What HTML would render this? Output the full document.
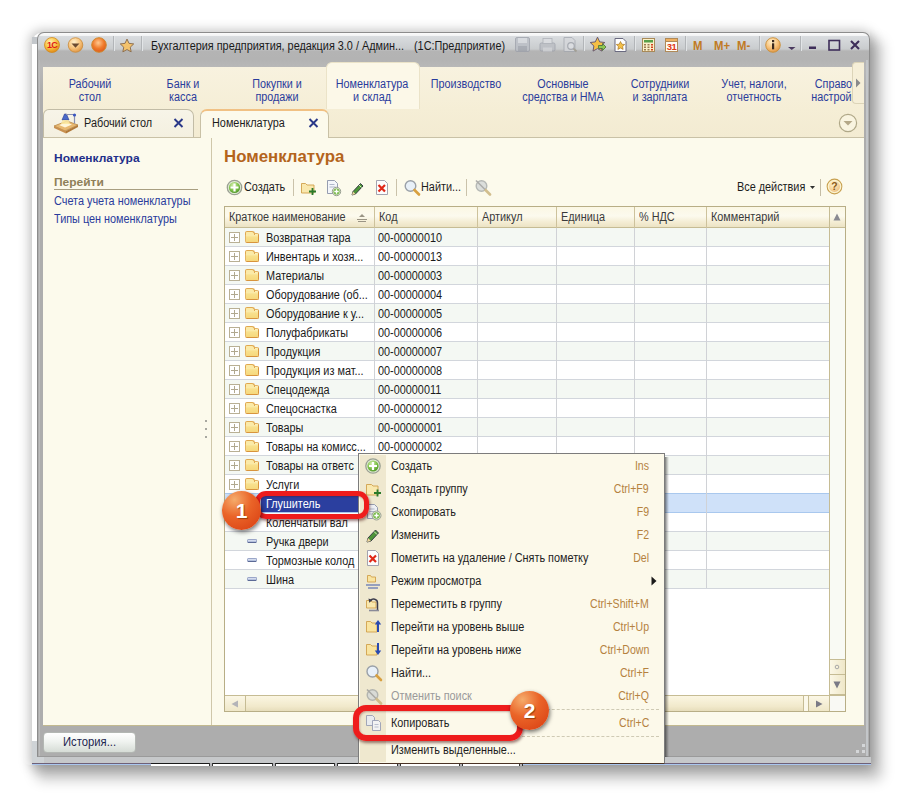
<!DOCTYPE html>
<html lang="ru"><head><meta charset="utf-8"><title>Номенклатура</title>
<style>
*{box-sizing:border-box}
html,body{margin:0;padding:0}
body{width:903px;height:798px;position:relative;overflow:hidden;background:#fff;
 font-family:"Liberation Sans",sans-serif;font-size:12px;color:#202020}
div,span{position:absolute;white-space:nowrap}
svg{position:absolute;overflow:visible}
/* underlying desktop remnants */
#under-l{left:32px;top:741px;width:12px;height:23px;background:#cfd3d6}
#under-b{left:32px;top:757px;width:839px;height:6px;background:#c6c8ca}
#under-b2{left:32px;top:763px;width:839px;height:1px;background:#6e6078}
#under-b3{left:32px;top:764px;width:839px;height:1px;background:#a9c6ee}
/* window */
#shadow{left:33px;top:33px;width:837px;height:731px;border-radius:8px 8px 3px 3px;box-shadow:0 1.500px 12px 3px rgba(0,0,0,.27)}
#shadow-r{left:24px;top:25px;width:846px;height:740px;border-radius:6px;box-shadow:12px 15px 13px rgba(0,0,0,.22)}
#under-s{left:32px;top:37px;width:6px;height:705px;background:#fff}
#under-s2{left:32px;top:37px;width:6px;height:7px;background:#c3c7cb}
#win{left:37px;top:32px;width:833px;height:725px;border-radius:7px 7px 0 0;
 background:linear-gradient(#fbfbfb 0,#f2f3f4 3px,#dadde0 3px,#c9ccce 16px,#b4b4b4 18px,#b3b3b3 26px,#b8b8b8 35px,#adadad 60px,#adadad 100%);
 border:1px solid #8c8c8c;border-bottom-color:#9a9a9a}
#win-hi{display:none}
#frame-r{left:866px;top:60px;width:2px;height:696px;background:#c3c6c9}
#frame-l{left:39px;top:60px;width:1px;height:696px;background:#bcbcbc}
#title{left:151px;top:38px;height:16px;line-height:16px;color:#1a1a1a}
#title2{left:414px;top:38px;height:16px;line-height:16px;color:#1a1a1a}
.tsep{top:36px;width:1px;height:15px;background:#b2b5b8;box-shadow:1px 0 0 #e2e5e7}
/* sections panel */
#sect{left:43px;top:67px;width:821px;height:43px;background:linear-gradient(#f8f2df,#f5eed6)}
.sec{top:78px;text-align:center;color:#2a3c9c;line-height:13px;font-size:12px;transform:translateX(-50%) scaleX(.9);transform-origin:center}
#sec-act{left:326px;top:62px;width:94px;height:48px;border-radius:6px 6px 0 0;background:#fcf8e8;border:1px solid #ebe3c8;border-bottom:none}
#sec-scroll{left:852px;top:62px;width:12px;height:42px;border-radius:4px 0 0 4px;background:#f6efd8;border:1px solid #dcd4b8;border-right:none}
/* tabs */
#tabs{left:43px;top:109px;width:821px;height:28px;background:linear-gradient(#f5eed6,#f3ebd2)}
#tab1{left:43px;top:109px;width:151px;height:28px;border:1px solid #c2bca6;border-bottom:none;border-radius:6px 7px 0 0;background:linear-gradient(#f7f4e8,#f4f0e0)}
#tab2{left:200px;top:109px;width:129px;height:29px;border:1px solid #c9c1a6;border-bottom:none;border-radius:7px 7px 0 0;background:#fcfaec;border-top:2px solid #f1c184}
#tabline{left:43px;top:137px;width:821px;height:1px;background:#c9c1a6}
/* content */
#content{left:43px;top:138px;width:821px;height:588px;background:#fcfaec}
#navdiv{left:211px;top:138px;width:1px;height:588px;background:#cfc7aa}
#contentb{left:43px;top:725px;width:821px;height:1px;background:#c2b98f}
.nav{left:54px;color:#2a3c9c}
h1{position:absolute;margin:0;left:224px;top:146px;font-size:17px;line-height:22px;font-weight:bold;color:#b4641c;transform:scaleX(.99);transform-origin:left}
/* table */
#tbl{left:224px;top:206px;width:622px;height:506px;background:#fff;border:1px solid #b8ae86}
#thead{left:225px;top:207px;width:620px;height:21px;background:linear-gradient(#fbf7e4,#fcfaee 45%,#f4edd4 75%,#ece3c4);border-bottom:1px solid #c6bc94}
.hsep{top:207px;width:1px;height:21px;background:#cdc29c}
.th{top:208px;height:19px;line-height:19px;color:#3a3a3a}
.vsep{top:228px;width:1px;background:#d0d2d6}
.row{left:225px;width:604px;height:19px;border-bottom:1px solid #d2d6dc;background:#fff}
.row.alt{background:#f4f8f3}
.row.sel{background:#cfe1f9;border-bottom-color:#a9c8ee;box-shadow:0 -1px 0 #a9c8ee}
.nm{left:41px;top:1px;line-height:18px;height:18px;color:#1a1a1a}
.cd{left:153px;top:1px;line-height:18px;height:18px;color:#1a1a1a}
.selbg{left:36px;width:112px;background:#2b3f9f;top:0px;height:18px}
.selnm{color:#fff}
.plus{left:4px;top:4px;width:11px;height:11px;border:1px solid #b9b094;background:#fff}
.plus:before,.plus:after{content:"";position:absolute;background:#b0a88e}
.plus:before{left:1px;top:4px;width:7px;height:1px}
.plus:after{left:4px;top:1px;width:1px;height:7px}
.fold{left:20px;top:5px;width:14px;height:10px;border-radius:2px;background:linear-gradient(#fdf3c0,#f8e08c 40%,#f6d87c);border:1px solid #e4b464;border-right-color:#d8943c;border-bottom-color:#d8943c}
.fold:before{content:"";position:absolute;left:-1px;top:-3px;width:8px;height:3px;border-radius:2px 3px 0 0;background:#fbeaa8;border:1px solid #e0a850;border-bottom:none}
.item{left:22px;top:7px;width:10px;height:4px;border-radius:1.5px;background:linear-gradient(#e4eaf6,#a6b4d6);border:1px solid #9aa6c8;border-bottom-color:#5c6a96}
/* scrollbars */
#vsb{left:829px;top:207px;width:16px;height:488px;background:#f9faf4;border-left:1px solid #c6bc94}
#hsb{left:225px;top:695px;width:605px;height:16px;background:#fbf8ea;border-top:1px solid #c6bc94}
.sbbtn{width:15px;height:15px;background:linear-gradient(90deg,#fbf7e6,#efe7c8)}
/* bottom */
#hist{left:43px;top:732px;width:93px;height:21px;border-radius:4px;border:1px solid #b3b7b3;background:linear-gradient(#ffffff,#f0f3f0 45%,#d6dcd6)}
#histt{left:63px;top:734px;line-height:16px;color:#1c2550;font-size:12.5px;transform:scaleX(.9);transform-origin:left}
/* menu */
#menu{left:358px;top:453px;width:307px;height:311px;background:#fcf9ea;border:1px solid #7c7c7c;border-bottom-color:#4a3224;}
#menush{left:665px;top:457px;width:4px;height:300px;background:linear-gradient(90deg,rgba(0,0,0,.5),rgba(0,0,0,.28) 40%,rgba(0,0,0,0))}
#menuic{left:360px;top:455px;width:26px;height:307px;background:#efe8cf}
.mi{left:391px;height:16px;line-height:16px;color:#1e1e1e}
.mk{right:254px;height:16px;line-height:16px;color:#b5823f;text-align:right;transform:scaleX(.88);transform-origin:right}
.msep{left:388px;width:271px;height:0;border-top:1px dashed #cfcab4}
/* annotations */
.ann{border:5px solid #ee1c1c;border-radius:11px;box-shadow:1px 2px 3px rgba(60,0,0,.5), inset 1px 1px 2px rgba(90,0,0,.3)}
.badge{width:31px;height:31px;border-radius:50%;background:radial-gradient(circle at 32% 22%,#f5ac6c,#ea6428 42%,#dd4818 82%);box-shadow:1px 2px 4px rgba(0,0,0,.55);color:#fff;font-weight:bold;font-size:19px;line-height:31px;text-align:center;letter-spacing:0;text-shadow:1px 1px 1px rgba(120,50,0,.7)}

.t,#title,#title2,.nav,.th,.nm,.cd,.mi{transform:scaleX(.905);transform-origin:left}
#tb{left:151px;top:763px;width:371px;height:1px;background:#1a1a1a}
#tbw{left:151px;top:764px;width:371px;height:2px;background:#fff}
.tbd{top:763px;width:4px;height:3px;background:#b4b4b8;border-left:1px solid #333;border-right:1px solid #333}

</style></head>
<body>
<!-- underlying remnants + shadow -->
<div id="shadow"></div><div id="shadow-r"></div>
<div id="under-s"></div><div id="under-s2"></div><div id="under-b"></div><div id="under-l"></div><div id="under-b2"></div><div id="under-b3"></div>
<div id="win"></div><div id="win-hi"></div><div id="frame-r"></div><div id="frame-l"></div>

<!-- title bar icons (left) -->
<svg style="left:43px;top:36px" width="80" height="18" viewBox="0 0 80 18">
 <defs>
  <radialGradient id="gy" cx="40%" cy="30%" r="70%"><stop offset="0" stop-color="#fff3b0"/><stop offset=".6" stop-color="#f8c040"/><stop offset="1" stop-color="#e08a18"/></radialGradient>
  <radialGradient id="go" cx="40%" cy="30%" r="70%"><stop offset="0" stop-color="#fff0cc"/><stop offset=".6" stop-color="#f7c27a"/><stop offset="1" stop-color="#e09848"/></radialGradient>
  <radialGradient id="gr" cx="45%" cy="35%" r="70%"><stop offset="0" stop-color="#ffc890"/><stop offset=".55" stop-color="#f07a2a"/><stop offset="1" stop-color="#d9541a"/></radialGradient>
 </defs>
 <circle cx="9" cy="9" r="7.5" fill="url(#gy)" stroke="#d08a20" stroke-width=".8"/>
 <text x="9" y="12.3" font-family="Liberation Sans,sans-serif" font-size="9" font-weight="bold" fill="#e01818" text-anchor="middle" letter-spacing="-0.8">1С</text>
 <circle cx="32.5" cy="9" r="7.3" fill="url(#go)" stroke="#c98a3a" stroke-width=".8"/>
 <path d="M28.5 7.5h8l-4 4.2z" fill="#6a4a30"/>
 <circle cx="56" cy="9" r="7.3" fill="url(#gr)" stroke="#d08a30" stroke-width="1"/>
</svg>
<div class="tsep" style="left:113px"></div>
<svg style="left:119px;top:38px" width="16" height="15" viewBox="0 0 18 17"><path d="M9 1.2l2.300 4.900 5.300.6-3.900 3.700 1 5.300L9 13.100l-4.700 2.600 1-5.300L1.400 6.700l5.300-.6z" fill="#f3c26c" stroke="#8c6e4e" stroke-width="1.100" stroke-linejoin="round"/></svg>
<div class="tsep" style="left:141px"></div>
<div id="title">Бухгалтерия предприятия, редакция 3.0 / Админ...</div>
<div id="title2">(1С:Предприятие)</div>

<!-- title bar icons (right) -->
<svg style="left:514px;top:36px" width="64" height="18" viewBox="0 0 64 18" opacity=".75">
 <rect x="1.500" y="1.500" width="14" height="14" rx="1.500" fill="#b8bcc4" stroke="#9a9ea8"/>
 <rect x="4" y="2" width="9" height="5" fill="#d8dbe0"/><rect x="4" y="10" width="9" height="5" fill="#9ea2ac"/>
 <rect x="26" y="7" width="15" height="8" rx="1.500" fill="#b9bcc2" stroke="#9a9ea8"/>
 <rect x="29" y="2.500" width="9" height="5" fill="#dcdee2" stroke="#a4a7ae" stroke-width=".8"/><rect x="29" y="11.500" width="9" height="4" fill="#d0d2d6"/>
 <path d="M50 1.500h8l3 3v11H50z" fill="#d6d8dc" stroke="#a2a6ae"/>
 <circle cx="57" cy="10" r="3.300" fill="#e0e2e6" stroke="#9a9ea6" stroke-width="1.200"/><path d="M59.500 12.500l3 3" stroke="#9a9688" stroke-width="1.800"/>
</svg>
<div class="tsep" style="left:583px"></div>
<svg style="left:589px;top:36px" width="40" height="18" viewBox="0 0 40 18">
 <path d="M8.500 1.200l2.200 4.700 5.100.6-3.700 3.500.9 5.100-4.500-2.500L4 15.100l.9-5.100L1.200 6.500l5.100-.6z" fill="#f4bf45" stroke="#6a5a70" stroke-width="1" stroke-linejoin="round"/>
 <path d="M9.500 9.500h4v-2l3.500 3.500-3.500 3.500v-2h-4z" fill="#8cc850" stroke="#4a6a3a" stroke-width=".8"/>
 <path d="M26 2.500h8l3 3v10H26z" fill="#fdfdfd" stroke="#6a6a80"/>
 <path d="M31.500 5.500l1.300 2.700 2.900.3-2.100 2 .5 2.900-2.600-1.400-2.600 1.400.5-2.900-2.100-2 2.900-.3z" fill="#f4bf45" stroke="#a8782c" stroke-width=".7"/>
</svg>
<div class="tsep" style="left:634px"></div>
<svg style="left:641px;top:36px" width="40" height="18" viewBox="0 0 40 18">
 <rect x="1.500" y="2.500" width="12" height="13" fill="#fbf0c8" stroke="#a88a58"/>
 <rect x="3" y="4" width="9" height="2.500" fill="#58a048"/>
 <g fill="#9a7a50"><rect x="3" y="8" width="2" height="1.500"/><rect x="6.500" y="8" width="2" height="1.500"/><rect x="10" y="8" width="2" height="1.500" fill="#d04020"/><rect x="3" y="10.500" width="2" height="1.500"/><rect x="6.500" y="10.500" width="2" height="1.500"/><rect x="10" y="10.500" width="2" height="1.500" fill="#d04020"/><rect x="3" y="13" width="2" height="1.500"/><rect x="6.500" y="13" width="2" height="1.500"/><rect x="10" y="13" width="2" height="1.500" fill="#d04020"/></g>
 <rect x="24.500" y="2.500" width="12" height="13" fill="#fffdf4" stroke="#b08a58"/>
 <rect x="24.500" y="2.500" width="12" height="3" fill="#f0b060" stroke="#b08a58"/>
 <text x="30.500" y="14.300" font-family="Liberation Sans,sans-serif" font-size="9.500" font-weight="bold" fill="#e03818" text-anchor="middle" letter-spacing="-0.6">31</text>
</svg>
<div class="tsep" style="left:685px"></div>
<div class="t" style="left:693px;top:38px;line-height:16px;font-weight:bold;color:#c07a24;font-size:12.5px">M</div>
<div class="t" style="left:714px;top:38px;line-height:16px;font-weight:bold;color:#c07a24;font-size:12.5px">M+</div>
<div class="t" style="left:737px;top:38px;line-height:16px;font-weight:bold;color:#c07a24;font-size:12.5px">M-</div>
<div class="tsep" style="left:759px"></div>
<svg style="left:765px;top:37px" width="32" height="16" viewBox="0 0 32 16">
 <circle cx="8" cy="8" r="7.300" fill="url(#go)" stroke="#c9903a" stroke-width=".9"/>
 <rect x="7" y="6.300" width="2.200" height="6" fill="#3a2a20"/><rect x="7" y="3" width="2.200" height="2.200" fill="#3a2a20"/>
 <path d="M23 10h7.500l-3.750 3z" fill="#4a3a60"/>
</svg>
<div class="tsep" style="left:800px"></div>
<svg style="left:806px;top:38px" width="56" height="14" viewBox="0 0 56 14">
 <rect x="3" y="8.500" width="7" height="2.500" fill="#3e2e5a"/>
 <rect x="23" y="2.500" width="10.500" height="9.500" fill="none" stroke="#3e2e5a" stroke-width="1.600"/>
 <path d="M45 3l8 8M53 3l-8 8" stroke="#3e2e5a" stroke-width="2.100"/>
</svg>

<!-- sections panel -->
<div id="sect"></div>
<div id="sec-act"></div>
<div class="sec" style="left:90px">Рабочий<br>стол</div>
<div class="sec" style="left:183px">Банк и<br>касса</div>
<div class="sec" style="left:277px">Покупки и<br>продажи</div>
<div class="sec" style="left:372px">Номенклатура<br>и склад</div>
<div class="sec" style="left:466px">Производство</div>
<div class="sec" style="left:563px">Основные<br>средства и НМА</div>
<div class="sec" style="left:660px">Сотрудники<br>и зарплата</div>
<div class="sec" style="left:754px">Учет, налоги,<br>отчетность</div>
<div style="left:804px;top:78px;width:49.500px;height:28px;overflow:hidden"><div class="sec" style="left:48px;top:0">Справочники и<br>настройки учета</div></div>
<div id="sec-scroll"></div>
<svg style="left:855px;top:78px" width="6" height="10" viewBox="0 0 6 10"><path d="M1 0.500l4.500 4.500-4.500 4.500z" fill="#8a8a8a"/></svg>

<!-- tabs -->
<div id="tabs"></div>
<div id="tabline"></div>
<div id="tab1"></div>
<div id="tab2"></div>
<svg style="left:53px;top:111px" width="26" height="22" viewBox="0 0 26 22">
 <path d="M1 15l13-5 11 4-13 6z" fill="#e8b870" stroke="#b88848" stroke-width=".8"/>
 <path d="M1 15v2l12 5.500v-2.500z" fill="#c89050"/><path d="M13 20v2.500l12-6.500v-2z" fill="#b07838"/>
 <path d="M6 14l7-2.500 6 2-7 3z" fill="#fff6d8"/>
 <path d="M9 9l2.500-6h2l2.500 6z" fill="#4a6ac8" stroke="#2a3a90" stroke-width=".6"/>
 <path d="M8 13l1.500-4h6l1.500 4z" fill="#fbe9a0" opacity=".85"/>
 <path d="M13 3.500h8.500v9" fill="none" stroke="#8a90b0" stroke-width="1.200"/>
 <circle cx="21.500" cy="4" r="1.600" fill="#3a56c0"/>
</svg>
<div class="t" style="left:84px;top:115px;line-height:16px;color:#1c1c1c">Рабочий стол</div>
<svg style="left:173px;top:118px" width="11" height="10" viewBox="0 0 11 10"><path d="M1.500 1l8 8M9.500 1l-8 8" stroke="#2a3888" stroke-width="1.900"/></svg>
<div class="t" style="left:212px;top:115px;line-height:16px;color:#1c1c1c">Номенклатура</div>
<svg style="left:308px;top:118px" width="11" height="10" viewBox="0 0 11 10"><path d="M1.500 1l8 8M9.500 1l-8 8" stroke="#2a3888" stroke-width="1.900"/></svg>
<svg style="left:838px;top:113px" width="20" height="20" viewBox="0 0 20 20"><circle cx="10" cy="10" r="8.600" fill="#f9f4e0" stroke="#b0a888" stroke-width="1.200"/><path d="M5.500 8h9l-4.500 4.500z" fill="#b4a888"/></svg>

<!-- content -->
<div id="content"></div>
<div id="navdiv"></div>
<div id="contentb"></div>
<div class="nav" style="top:150px;font-weight:bold;line-height:16px;color:#1f2f8a;font-size:10.5px;transform:scaleX(1.14)">Номенклатура</div>
<div class="nav" style="top:175px;font-weight:bold;line-height:15px;color:#8f8058;font-size:10.5px;transform:scaleX(1.14)">Перейти</div>
<div style="left:54px;top:189px;width:144px;height:1px;background:#a89e80"></div>
<div class="nav" style="top:193px;line-height:16px">Счета учета номенклатуры</div>
<div class="nav" style="top:211px;line-height:16px">Типы цен номенклатуры</div>
<svg style="left:204px;top:419px" width="4" height="22" viewBox="0 0 4 22"><g fill="#a8a8a0"><rect x="1" y="1" width="2" height="2"/><rect x="1" y="9" width="2" height="2"/><rect x="1" y="17" width="2" height="2"/></g></svg>
<h1>Номенклатура</h1>

<!-- toolbar -->
<svg style="left:226px;top:179px" width="16" height="16" viewBox="0 0 16 16">
 <defs><radialGradient id="gg" cx="40%" cy="30%" r="75%"><stop offset="0" stop-color="#d8f0b0"/><stop offset=".6" stop-color="#7cc048"/><stop offset="1" stop-color="#4a9028"/></radialGradient></defs>
 <circle cx="8.500" cy="8.500" r="7.200" fill="#e4ecd8" stroke="#9aa092" stroke-width="1.300"/>
 <circle cx="8.500" cy="8.500" r="5.600" fill="url(#gg)"/>
 <path d="M8.500 4.500v8M4.500 8.500h8" stroke="#fff" stroke-width="2.200"/>
</svg>
<div class="t" style="left:244px;top:179px;line-height:16px;color:#1c1c1c">Создать</div>
<div style="left:293px;top:179px;width:1px;height:17px;background:#cac2aa"></div>
<svg style="left:300px;top:179px" width="76" height="17" viewBox="0 0 76 17">
 <path d="M1.500 4.500h4l1.500 1.500h7v8h-12.500z" fill="#f9e8ae" stroke="#d0a04c" stroke-width=".9"/>
 <path d="M12.500 9v7M9 12.500h7" stroke="#2a7a2a" stroke-width="1.800"/>
 <path d="M27.500 1.500h7l3 3v10h-10z" fill="#f4f6fa" stroke="#8a92a8" stroke-width=".9"/>
 <path d="M29.500 5.500h5M29.500 8h6" stroke="#a8b0c4" stroke-width=".9"/>
 <circle cx="36.500" cy="12.500" r="4.200" fill="#e4ecd8" stroke="#9aa092" stroke-width="1"/><circle cx="36.500" cy="12.500" r="3.100" fill="#78b848"/><path d="M36.500 10.300v4.400M34.300 12.500h4.400" stroke="#fff" stroke-width="1.300"/>
 <path d="M53 12.500l7.500-8 2.500 2.500-7.500 8-3.500 1z" fill="#4c9438" stroke="#2c3040" stroke-width=".9"/><path d="M53 12.500l2.500 2.500-3.500 1z" fill="#f0d8a0"/><path d="M59 6l2.500 2.500" stroke="#d8f0c0" stroke-width="1"/>
</svg>
<svg style="left:375px;top:179px" width="14" height="17" viewBox="0 0 14 17">
 <path d="M1.500 1.500h8l3 3v11h-11z" fill="#fdfdfd" stroke="#9a9aa8" stroke-width=".9"/>
 <path d="M3.500 6l6.500 6.500M10 6l-6.500 6.500" stroke="#e02818" stroke-width="2.200"/>
</svg>
<div style="left:396px;top:179px;width:1px;height:17px;background:#cac2aa"></div>
<svg style="left:403px;top:179px" width="18" height="17" viewBox="0 0 18 17">
 <circle cx="7.500" cy="7" r="5.300" fill="#e8f0f8" stroke="#9aa0a8" stroke-width="1.400"/>
 <path d="M11.500 11l4.500 4.500" stroke="#d8a040" stroke-width="2.600" stroke-linecap="round"/>
</svg>
<div class="t" style="left:421px;top:179px;line-height:16px;color:#1c1c1c">Найти...</div>
<div style="left:466px;top:179px;width:1px;height:17px;background:#cac2aa"></div>
<svg style="left:473px;top:178px" width="20" height="18" viewBox="0 0 20 18" opacity=".8">
 <circle cx="8.500" cy="8" r="5.300" fill="#d4d8d8" stroke="#a4a8a8" stroke-width="1.400"/>
 <path d="M12.500 12l4.500 4.500" stroke="#c8b078" stroke-width="2.600" stroke-linecap="round"/>
 <path d="M3 2.500l9 9" stroke="#9a9a9a" stroke-width="1.600"/>
</svg>
<div class="t" style="left:737px;top:179px;line-height:16px;color:#1c1c1c">Все действия</div>
<svg style="left:810px;top:186px" width="5" height="3" viewBox="0 0 5 3"><path d="M0 0h5l-2.500 3z" fill="#303030"/></svg>
<div style="left:820px;top:179px;width:1px;height:17px;background:#c4bca4"></div>
<svg style="left:826px;top:178px" width="17" height="17" viewBox="0 0 18 18">
 <circle cx="9" cy="9" r="7.800" fill="#fbf3d0" stroke="#c8a050" stroke-width="1.100"/>
 <circle cx="9" cy="9" r="5.800" fill="url(#go)" opacity=".55"/>
 <text x="9" y="13" font-family="Liberation Sans,sans-serif" font-size="11" font-weight="bold" fill="#8a5a18" text-anchor="middle">?</text>
</svg>

<!-- table -->
<div id="tbl"></div>
<div id="thead"></div>
<div class="th" style="left:229px">Краткое наименование</div>
<svg style="left:356px;top:213px" width="12" height="9" viewBox="0 0 12 9"><path d="M6 1l3 3h-6z" fill="#9a9484"/><path d="M1 6.500h10M2 8.500h8" stroke="#9a9484" stroke-width="1"/></svg>
<div class="th" style="left:379px">Код</div>
<div class="th" style="left:482px">Артикул</div>
<div class="th" style="left:561px">Единица</div>
<div class="th" style="left:639px">% НДС</div>
<div class="th" style="left:711px">Комментарий</div>
<div class="row alt" style="top:228px"><span class="plus"></span><span class="fold"></span><span class="nm">Возвратная тара</span><span class="cd">00-00000010</span></div>
<div class="row" style="top:247px"><span class="plus"></span><span class="fold"></span><span class="nm">Инвентарь и хозя...</span><span class="cd">00-00000013</span></div>
<div class="row alt" style="top:266px"><span class="plus"></span><span class="fold"></span><span class="nm">Материалы</span><span class="cd">00-00000003</span></div>
<div class="row" style="top:285px"><span class="plus"></span><span class="fold"></span><span class="nm">Оборудование (об...</span><span class="cd">00-00000004</span></div>
<div class="row alt" style="top:304px"><span class="plus"></span><span class="fold"></span><span class="nm">Оборудование к у...</span><span class="cd">00-00000005</span></div>
<div class="row" style="top:323px"><span class="plus"></span><span class="fold"></span><span class="nm">Полуфабрикаты</span><span class="cd">00-00000006</span></div>
<div class="row alt" style="top:342px"><span class="plus"></span><span class="fold"></span><span class="nm">Продукция</span><span class="cd">00-00000007</span></div>
<div class="row" style="top:361px"><span class="plus"></span><span class="fold"></span><span class="nm">Продукция из мат...</span><span class="cd">00-00000008</span></div>
<div class="row alt" style="top:380px"><span class="plus"></span><span class="fold"></span><span class="nm">Спецодежда</span><span class="cd">00-00000011</span></div>
<div class="row" style="top:399px"><span class="plus"></span><span class="fold"></span><span class="nm">Спецоснастка</span><span class="cd">00-00000012</span></div>
<div class="row alt" style="top:418px"><span class="plus"></span><span class="fold"></span><span class="nm">Товары</span><span class="cd">00-00000001</span></div>
<div class="row" style="top:437px"><span class="plus"></span><span class="fold"></span><span class="nm">Товары на комисс...</span><span class="cd">00-00000002</span></div>
<div class="row alt" style="top:456px"><span class="plus"></span><span class="fold"></span><span class="nm">Товары на ответс</span></div>
<div class="row" style="top:475px"><span class="plus"></span><span class="fold"></span><span class="nm">Услуги</span></div>
<div class="row alt sel" style="top:494px"><span class="selbg"></span><span class="nm selnm">Глушитель</span></div>
<div class="row" style="top:513px"><span class="nm">Коленчатый вал</span></div>
<div class="row alt" style="top:532px"><span class="item"></span><span class="nm">Ручка двери</span></div>
<div class="row" style="top:551px"><span class="item"></span><span class="nm">Тормозные колод</span></div>
<div class="row alt" style="top:570px"><span class="item"></span><span class="nm">Шина</span></div>
<!-- column separators -->
<div class="vsep" style="left:374px;height:360px"></div>
<div class="vsep" style="left:477px;height:360px"></div>
<div class="vsep" style="left:556px;height:360px"></div>
<div class="vsep" style="left:634px;height:360px"></div>
<div class="vsep" style="left:706px;height:360px"></div>
<div class="hsep" style="left:374px"></div><div class="hsep" style="left:477px"></div><div class="hsep" style="left:556px"></div><div class="hsep" style="left:634px"></div><div class="hsep" style="left:706px"></div>
<!-- scrollbars -->
<div id="vsb"></div>
<div id="hsb"></div>
<div style="left:829px;top:207px;width:16px;height:21px;background:linear-gradient(#fbf7e4,#fcfaee 45%,#f4edd4 75%,#ece3c4);border-left:1px solid #c6bc94;border-bottom:1px solid #c6bc94"></div>
<svg style="left:833px;top:213px" width="8" height="8" viewBox="0 0 8 8"><path d="M4 0.500l3.500 7h-7z" fill="#8a8a92"/></svg>
<div style="left:829px;top:659px;width:16px;height:16px;background:linear-gradient(90deg,#fbf7e6,#efe7c8);border-left:1px solid #c6bc94;border-top:1px solid #c6bc94;border-bottom:1px solid #c6bc94"></div>
<div style="left:829px;top:675px;width:16px;height:20px;background:linear-gradient(90deg,#fbf7e6,#efe7c8);border-left:1px solid #c6bc94;border-bottom:1px solid #c6bc94"></div>
<svg style="left:833px;top:681px" width="8" height="8" viewBox="0 0 8 8"><path d="M0.500 0.500h7l-3.500 7z" fill="#7a7a86"/></svg>
<svg style="left:834px;top:664px" width="6" height="6" viewBox="0 0 6 6"><circle cx="3" cy="3" r="1.800" fill="none" stroke="#a8a8a8" stroke-width="1"/></svg>
<div style="left:225px;top:695px;width:21px;height:16px;background:linear-gradient(#fbf7e6,#efe7c8);border-top:1px solid #c6bc94;border-right:1px solid #c6bc94"></div>
<svg style="left:231px;top:700px" width="8" height="8" viewBox="0 0 8 8"><path d="M7 0.500v7l-6.500-3.500z" fill="#b4b4b8"/></svg>
<div style="left:246px;top:695px;width:558px;height:16px;background:linear-gradient(#fbf6e2,#f1e9cb 70%,#e6ddbb);border-top:1px solid #c6bc94;border-right:1px solid #c6bc94"></div>
<div style="left:808px;top:695px;width:22px;height:16px;background:linear-gradient(#fbf7e6,#efe7c8);border-top:1px solid #c6bc94;border-left:1px solid #c6bc94;border-right:1px solid #c6bc94"></div>
<svg style="left:815px;top:700px" width="8" height="8" viewBox="0 0 8 8"><path d="M1 0.500v7l6.500-3.500z" fill="#7a7a86"/></svg>
<div style="left:829px;top:695px;width:16px;height:16px;background:#f9f9f4;border-left:1px solid #c6bc94;border-top:1px solid #c6bc94"></div>

<!-- bottom bar -->
<div id="hist"></div><div id="histt">История...</div>
<svg style="left:855px;top:743px" width="12" height="12" viewBox="0 0 12 12"><g fill="#d4d6d8"><rect x="7" y="1" width="3" height="3"/><rect x="1" y="7" width="3" height="3"/><rect x="7" y="7" width="3" height="3"/></g></svg>

<div id="tb"></div><div id="tbw"></div><div class="tbd" style="left:209px"></div><div class="tbd" style="left:272px"></div><div class="tbd" style="left:334px"></div><div class="tbd" style="left:397px"></div><div class="tbd" style="left:459px"></div><div class="tbd" style="left:519px"></div>
<!-- context menu -->
<div id="menush"></div><div id="menu"></div>
<div id="menuic"></div>
<div class="mi" style="top:458px">Создать</div><div class="mk" style="top:458px">Ins</div>
<div class="mi" style="top:481px">Создать группу</div><div class="mk" style="top:481px">Ctrl+F9</div>
<div class="mi" style="top:504px">Скопировать</div><div class="mk" style="top:504px">F9</div>
<div class="mi" style="top:527px">Изменить</div><div class="mk" style="top:527px">F2</div>
<div class="mi" style="top:550px">Пометить на удаление / Снять пометку</div><div class="mk" style="top:550px">Del</div>
<div class="mi" style="top:573px">Режим просмотра</div>
<svg style="left:651px;top:576px" width="6" height="10" viewBox="0 0 6 10"><path d="M0.500 0.500l5 4.500-5 4.500z" fill="#1a1a1a"/></svg>
<div class="mi" style="top:596px">Переместить в группу</div><div class="mk" style="top:596px">Ctrl+Shift+M</div>
<div class="mi" style="top:619px">Перейти на уровень выше</div><div class="mk" style="top:619px">Ctrl+Up</div>
<div class="mi" style="top:642px">Перейти на уровень ниже</div><div class="mk" style="top:642px">Ctrl+Down</div>
<div class="mi" style="top:665px">Найти...</div><div class="mk" style="top:665px">Ctrl+F</div>
<div class="mi" style="top:688px;color:#9a9a9a">Отменить поиск</div><div class="mk" style="top:688px">Ctrl+Q</div>
<div class="msep" style="top:709px"></div>
<div class="mi" style="top:715px">Копировать</div><div class="mk" style="top:715px">Ctrl+C</div>
<div class="msep" style="top:736px"></div>
<div class="mi" style="top:742px">Изменить выделенные...</div>

<!-- menu icons -->
<svg style="left:364px;top:457px" width="18" height="18" viewBox="0 0 18 18">
 <circle cx="9" cy="9" r="7.200" fill="#e4ecd8" stroke="#9aa092" stroke-width="1.300"/>
 <circle cx="9" cy="9" r="5.600" fill="url(#gg)"/>
 <path d="M9 5v8M5 9h8" stroke="#fff" stroke-width="2.200"/>
</svg>
<svg style="left:364px;top:481px" width="20" height="18" viewBox="0 0 20 18">
 <path d="M2.500 3.500h5l1.500 1.500h5v9h-11.500z" fill="#f9e8ae" stroke="#d0a04c" stroke-width=".9"/>
 <path d="M13.500 8.500v7M10 12h7" stroke="#2a7a2a" stroke-width="1.800"/>
</svg>
<svg style="left:366px;top:503px" width="18" height="20" viewBox="0 0 18 20">
 <path d="M1.500 1.500h7l3 3v11h-10z" fill="#eef0f4" stroke="#8a92a8" stroke-width=".9"/>
 <path d="M3.500 6h5M3.500 8.500h6M3.500 11h6" stroke="#a8b0c4" stroke-width=".9"/>
 <circle cx="10.500" cy="12.500" r="4.500" fill="#e4ecd8" stroke="#9aa092" stroke-width="1"/><circle cx="10.500" cy="12.500" r="3.300" fill="#78b848"/><path d="M10.500 10.300v4.400M8.300 12.500h4.400" stroke="#fff" stroke-width="1.400"/>
</svg>
<svg style="left:366px;top:527px" width="14" height="16" viewBox="0 0 14 16">
 <path d="M2 11l7.500-8 3 3-7.500 8-4 1z" fill="#4c9438" stroke="#2c3040" stroke-width=".9"/><path d="M2 11l3 3-4 1z" fill="#f0d8a0"/><path d="M8 4.500l3 3" stroke="#d8f0c0" stroke-width="1"/>
</svg>
<svg style="left:366px;top:549px" width="14" height="18" viewBox="0 0 14 18">
 <path d="M1.500 1.500h8l3 3v12h-11z" fill="#fdfdfd" stroke="#9a9aa8" stroke-width=".9"/>
 <path d="M3.500 6.500l6.500 6.500M10 6.500l-6.500 6.500" stroke="#e02818" stroke-width="2.200"/>
</svg>
<svg style="left:365px;top:573px" width="16" height="18" viewBox="0 0 16 18">
 <path d="M2.500 2.500h3l1 1.500h4v5h-8z" fill="#f9e4a0" stroke="#d0a04c" stroke-width=".9"/>
 <path d="M1 12h14M3 15h10" stroke="#7a88b8" stroke-width="1.300"/>
</svg>
<svg style="left:365px;top:595px" width="16" height="18" viewBox="0 0 16 18">
 <path d="M1.500 5.500h4l1.500 1.500h4v6h-9.500z" fill="#f9e8ae" stroke="#d0a04c" stroke-width=".9"/>
 <path d="M12.500 15v-7c0-4-5-5-7-2.500" fill="none" stroke="#3c3c4c" stroke-width="1.500"/><path d="M3.500 3.500l.8 4.200 3.200-2.700z" fill="#3c3c4c"/>
 <path d="M4 15.500h10" stroke="#8a8a98" stroke-width="1.600"/>
</svg>
<svg style="left:364px;top:617px" width="20" height="18" viewBox="0 0 20 18">
 <path d="M2.500 4.500h4l1.500 1.500h5v9h-10.500z" fill="#f9e4a0" stroke="#d0a04c" stroke-width=".9"/>
 <path d="M14 15v-8" stroke="#2a4ab0" stroke-width="2"/><path d="M10.800 7.500l3.200-4.500 3.200 4.500z" fill="#2a4ab0"/>
</svg>
<svg style="left:364px;top:640px" width="20" height="18" viewBox="0 0 20 18">
 <path d="M2.500 4.500h4l1.500 1.500h5v9h-10.500z" fill="#f9e4a0" stroke="#d0a04c" stroke-width=".9"/>
 <path d="M14 3v8" stroke="#2a4ab0" stroke-width="2"/><path d="M10.800 10.500l3.200 4.500 3.200-4.500z" fill="#2a4ab0"/>
</svg>
<svg style="left:365px;top:664px" width="18" height="18" viewBox="0 0 18 18">
 <circle cx="7.500" cy="7.500" r="5.500" fill="#e8f0f8" stroke="#9aa0a8" stroke-width="1.400"/>
 <path d="M11.500 11.500l4.500 4.500" stroke="#d8a040" stroke-width="2.600" stroke-linecap="round"/>
</svg>
<svg style="left:364px;top:687px" width="20" height="18" viewBox="0 0 20 18" opacity=".8">
 <circle cx="8.500" cy="8" r="5.300" fill="#d4d8d8" stroke="#a4a8a8" stroke-width="1.400"/>
 <path d="M12.500 12l4.500 4.500" stroke="#c8b078" stroke-width="2.600" stroke-linecap="round"/>
 <path d="M3 2.500l9 9" stroke="#9a9a9a" stroke-width="1.600"/>
</svg>
<svg style="left:365px;top:714px" width="17" height="18" viewBox="0 0 17 18" opacity=".85">
 <path d="M1.500 1.500h6l2 2v8h-8z" fill="#e8ecf4" stroke="#8a92b0" stroke-width=".9"/>
 <path d="M7.500 6.500h6l2 2v8h-8z" fill="#f4f6fa" stroke="#8a92b0" stroke-width=".9"/>
 <path d="M9.500 10.500h4M9.500 13h4" stroke="#a8b0c8" stroke-width=".9"/>
</svg>

<!-- annotations -->
<div class="ann" style="left:255px;top:491px;width:114px;height:28px"></div>
<div class="badge" style="left:222px;top:491px;width:39px;height:39px;line-height:39px;font-size:21px">1</div>
<div class="ann" style="left:353px;top:705px;width:170px;height:36px;border-width:6px;border-radius:13px"></div>
<div class="badge" style="left:510px;top:691px;width:39px;height:39px;line-height:39px;font-size:21px">2</div>
</body></html>
